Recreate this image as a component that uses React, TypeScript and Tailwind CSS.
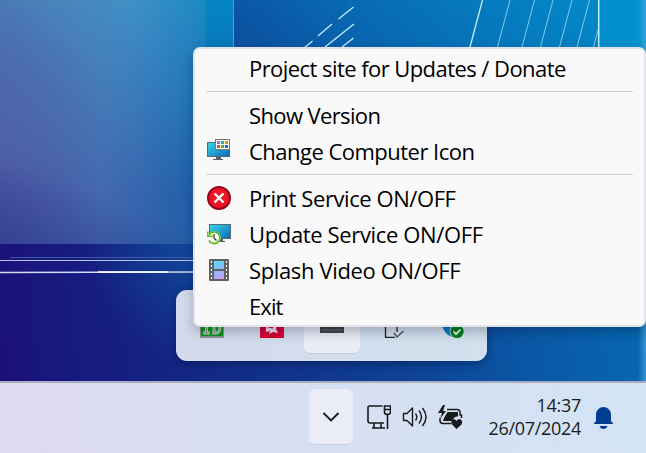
import type { ReactNode } from "react";

function Wallpaper() {
  return (
    <svg className="absolute inset-0" width="646" height="381" viewBox="0 0 646 381" aria-hidden="true">
      <defs>
        <linearGradient id="base" gradientUnits="userSpaceOnUse" x1="0" y1="381" x2="646" y2="300">
          <stop offset="0" stopColor="#1b1078" />
          <stop offset=".08" stopColor="#18177d" />
          <stop offset=".22" stopColor="#152182" />
          <stop offset=".35" stopColor="#122c86" />
          <stop offset=".62" stopColor="#0e4294" />
          <stop offset=".8" stopColor="#0b56a4" />
          <stop offset="1" stopColor="#0668b2" />
        </linearGradient>
        <radialGradient id="glow" gradientUnits="userSpaceOnUse" cx="230" cy="215" r="155">
          <stop offset="0" stopColor="#0d55a2" />
          <stop offset="1" stopColor="#0d55a2" stopOpacity="0" />
        </radialGradient>
        <linearGradient id="paneTop" x1="0" y1="0" x2="1" y2="0">
          <stop offset="0" stopColor="#4a7ab6" />
          <stop offset=".35" stopColor="#4987be" />
          <stop offset=".65" stopColor="#4090c8" />
          <stop offset="1" stopColor="#1b8ac4" />
        </linearGradient>
        <linearGradient id="paneLow" x1="0" y1="0" x2="1" y2="0">
          <stop offset="0" stopColor="#4c509f" />
          <stop offset=".5" stopColor="#4468ae" />
          <stop offset="1" stopColor="#1c5ea9" />
        </linearGradient>
        <linearGradient id="fade" x1="0" y1="0" x2="0" y2="1">
          <stop offset="0" stopColor="#fff" stopOpacity="0" />
          <stop offset=".8" stopColor="#fff" />
        </linearGradient>
        <mask id="fadeMask">
          <rect width="206" height="244" fill="url(#fade)" />
        </mask>
        <radialGradient id="violet" gradientUnits="userSpaceOnUse" cx="-10" cy="110" r="110">
          <stop offset="0" stopColor="#5066ae" stopOpacity=".7" />
          <stop offset="1" stopColor="#5066ae" stopOpacity="0" />
        </radialGradient>
        <linearGradient id="dusk" gradientUnits="userSpaceOnUse" x1="50" y1="175" x2="20" y2="255">
          <stop offset="0" stopColor="#2a3a8f" stopOpacity="0" />
          <stop offset="1" stopColor="#2a3a8f" stopOpacity=".7" />
        </linearGradient>
        <linearGradient id="window" x1="0" y1=".6" x2="1" y2=".4">
          <stop offset="0" stopColor="#0c509f" />
          <stop offset=".4" stopColor="#0869b2" />
          <stop offset="1" stopColor="#0386c5" />
        </linearGradient>
        <linearGradient id="strip" x1="0" y1="0" x2="0" y2="1">
          <stop offset="0" stopColor="#0585c3" />
          <stop offset="1" stopColor="#0675b8" />
        </linearGradient>
        <linearGradient id="edge" x1="0" y1="0" x2="1" y2="0">
          <stop offset="0" stopColor="#4baadb" stopOpacity="0" />
          <stop offset="1" stopColor="#4baadb" stopOpacity=".7" />
        </linearGradient>
      </defs>
      <rect width="646" height="381" fill="url(#base)" />
      <rect width="390" height="381" fill="url(#glow)" />
      <rect width="206" height="244" fill="url(#paneTop)" />
      <rect width="206" height="244" fill="url(#paneLow)" mask="url(#fadeMask)" />
      <rect width="206" height="244" fill="url(#violet)" />
      <rect y="160" width="206" height="84" fill="url(#dusk)" />
      <rect x="206" width="28" height="60" fill="url(#strip)" />
      <rect x="234" width="365" height="60" fill="url(#window)" />
      <rect x="599" width="47" height="60" fill="#0390cd" />
      <path d="M233.500 0V50" stroke="#4ba0d7" />
      <path d="M598.700 0V50" stroke="#c3f2fb" strokeWidth="1.500" />
      <g stroke="#c5f0f8" strokeWidth="1.300" fill="none">
        <path d="M353.500 7L338.500 19M332 24L318 36M312.500 41L304 48M354 24L325 47M353.500 38L342 47" />
        <path d="M482.500 0L470 47" />
      </g>
      <path
        d="M510 0L497.500 47M534.500 0L522 47M553 0L540.500 47M572 0L559.500 47M589.500 0L577 47M598 30L593.500 47"
        stroke="#82cbe9"
        fill="none"
      />
      <path d="M10 257.500H193" stroke="#3f5aaa" />
      <path d="M0 260.500H193" stroke="#b5c4f2" strokeWidth="1.200" />
      <path d="M0 272.500L193 272" stroke="#d5d8f5" strokeWidth="1.500" />
      <path d="M98 272H168" stroke="#fff" strokeWidth="1.500" />
      <rect x="638" width="8" height="381" fill="url(#edge)" />
    </svg>
  );
}

function Monitor() {
  return (
    <>
      <defs>
        <linearGradient id="screen" x1="0" y1="0" x2="1" y2="1">
          <stop stopColor="#37d8e5" />
          <stop offset="1" stopColor="#0868bd" />
        </linearGradient>
      </defs>
      <path d="M9 18h5v2h2v1H6v-1h3z" fill="#5b6064" />
      <rect x=".5" y="3.500" width="22" height="14" fill="url(#screen)" stroke="#546b75" />
    </>
  );
}

function DisplayIcon() {
  return (
    <svg className="relative -top-px" width="24" height="22" viewBox="0 0 24 22">
      <Monitor />
      <rect x="8.500" y=".5" width="14" height="10" fill="#fff" stroke="#77797b" />
      <path d="M10 2h3v3h-3z" fill="#9a6bd0" />
      <path d="M14 2h3v3h-3z" fill="#18b2b0" />
      <path d="M18 2h3v3h-3z" fill="#f58b00" />
      <path d="M10 6h3v3h-3z" fill="#e34b1c" />
      <path d="M14 6h3v3h-3z" fill="#54b516" />
      <path d="M18 6h3v3h-3z" fill="#0875d0" />
    </svg>
  );
}

function ErrorIcon() {
  return (
    <svg width="24" height="24" viewBox="0 0 24 24">
      <circle cx="12" cy="12" r="11" fill="#ed1428" stroke="#95051c" strokeWidth="2" />
      <path d="M7.500 7.500l9 9m0-9l-9 9" stroke="#fff" strokeWidth="2.400" />
    </svg>
  );
}

function UpdateIcon() {
  return (
    <svg width="24" height="22" viewBox="0 0 24 22">
      <rect x="2.500" y="1.500" width="21" height="14" fill="url(#screen)" stroke="#546b75" />
      <path d="M12 16h4v2h2v1h-6z" fill="#5b6064" />
      <circle cx="7.200" cy="14.800" r="6.500" fill="#f9f9f9" />
      <path d="M2 12A5.800 5.800 0 1 1 2 17.500" fill="none" stroke="#5ebd21" strokeWidth="1.700" />
      <path d="M.8 8.500v4.700H6" fill="none" stroke="#5ebd21" strokeWidth="1.500" />
      <path d="M7 11v4l2.500 2.500" fill="none" stroke="#333" strokeWidth="1.200" />
    </svg>
  );
}

function FilmIcon() {
  return (
    <svg width="20" height="22" viewBox="0 0 20 22">
      <defs>
        <linearGradient id="frames" gradientUnits="userSpaceOnUse" x1="5" y1="2" x2="14" y2="20">
          <stop stopColor="#58e1f9" />
          <stop offset=".5" stopColor="#8db8f8" />
          <stop offset="1" stopColor="#cf9bf8" />
        </linearGradient>
      </defs>
      <rect width="20" height="22" rx="1" fill="#606060" />
      <path d="M5 2h10v8H5zM5 12h10v8H5z" fill="url(#frames)" />
      <path d="M2.500 2v19M17.500 2v19" stroke="#f5f5f5" strokeWidth="1.200" strokeDasharray="2 2" />
    </svg>
  );
}

type RowProps = { text: string; spacing: string; icon?: ReactNode };

function Row({ text, spacing, icon }: RowProps) {
  return (
    <div className="flex h-9 items-center">
      <div className="flex w-[54px] shrink-0 pl-3">
        <span className="flex w-6 justify-center">{icon}</span>
      </div>
      <span className={`text-[22px] leading-9 whitespace-nowrap ${spacing}`}>{text}</span>
    </div>
  );
}

function Divider() {
  return (
    <div className="h-[11px] pt-[5px]">
      <div className="mr-[11px] ml-[11px] h-px bg-[#d2d2d2]" />
    </div>
  );
}

function ContextMenu() {
  return (
    <div className="absolute top-[47px] left-[193px] h-[280px] w-[453px] rounded-[7px] border-2 border-[#e2e3e6] bg-[#f9f9f9] pt-px text-black shadow-[0_5px_12px_rgba(0,0,30,0.25)]">
      <Row text="Project site for Updates / Donate" spacing="tracking-[-0.56px]" />
      <Divider />
      <Row text="Show Version" spacing="tracking-[-0.62px]" />
      <Row text="Change Computer Icon" spacing="tracking-[-0.52px]" icon={<DisplayIcon />} />
      <Divider />
      <Row text="Print Service ON/OFF" spacing="tracking-[-0.42px]" icon={<ErrorIcon />} />
      <Row text="Update Service ON/OFF" spacing="tracking-[-0.36px]" icon={<UpdateIcon />} />
      <Row text="Splash Video ON/OFF" spacing="tracking-[-0.36px]" icon={<FilmIcon />} />
      <Row text="Exit" spacing="tracking-[-0.9px]" />
    </div>
  );
}

function HiddenTray() {
  return (
    <div className="absolute top-[290px] left-[176px] flex h-[71px] w-[311px] items-end rounded-[11px] bg-linear-to-r from-[#d4daeb] to-[#d1e1ee] pb-[7px] pl-2 shadow-[0_3px_10px_rgba(0,0,40,0.35)]">
      <div className="flex h-14 w-[56px] justify-center pt-4">
        <svg width="24" height="24" viewBox="0 0 24 24">
          <rect width="24" height="24" fill="#85938c" />
          <rect x="1" width="22" height="22" fill="#049814" />
          <path d="M3 19h7M6.500 5v14M12 19h4q4 0 4-7t-4-7h-4M14 5v14" fill="none" stroke="#d2e0d3" strokeWidth="2.800" />
          <path d="M3 19h7M6.500 5v14M12 19h4q4 0 4-7t-4-7h-4M14 5v14" fill="none" stroke="#779079" />
        </svg>
      </div>
      <div className="flex h-14 w-[64px] justify-center pt-4">
        <svg width="24" height="24" viewBox="0 0 24 24">
          <rect width="24" height="24" fill="#d60537" />
          <path d="M6 10l11-1-1 6 2 4-5-1-4 2 1-3-4 1z" fill="#f4dfe9" />
          <path d="M8 12.500l5 1" stroke="#d60537" strokeWidth="2" />
        </svg>
      </div>
      <div className="flex h-14 w-14 justify-center rounded-md border-b border-[#c2cad9] bg-[#e8ecf5] pt-4">
        <svg width="24" height="20" viewBox="0 0 24 20">
          <rect width="24" height="19" fill="#424446" />
          <path d="M2 16h20M2 11h20" stroke="#696b6d" />
        </svg>
      </div>
      <div className="flex h-14 w-[64px] justify-center pt-4">
        <svg width="24" height="24" viewBox="0 0 24 24">
          <path d="M15 23.300H5.500V5H17v13" fill="none" stroke="#202226" strokeWidth="1.300" />
          <path d="M14 19l3 4 6.500-6" fill="none" stroke="#4c535a" strokeWidth="1.400" />
        </svg>
      </div>
      <div className="flex h-14 w-[56px] justify-center pt-4">
        <svg width="24" height="24" viewBox="0 0 24 24">
          <path d="M1 3l11-3 11 3c0 11-4 17-11 20C5 20 1 14 1 3" fill="#0876c6" />
          <circle cx="17" cy="17.500" r="7.500" fill="#d8e3ec" />
          <circle cx="17" cy="17.500" r="6.700" fill="#07831b" />
          <path d="M13.500 17.500l2.500 2.500 4.500-4.500" fill="none" stroke="#fff" strokeWidth="1.700" />
        </svg>
      </div>
    </div>
  );
}

function Taskbar() {
  return (
    <div className="absolute inset-x-0 bottom-0 flex h-[72px] border-t-2 border-[#a9adbf] bg-linear-to-r from-[#dfdaf0] via-[#d8def1] via-35% to-[#d3e4f5] pl-[309px]">
      <div className="mt-[6px] flex h-14 w-[44px] items-center justify-center rounded-md border-b border-[#c9cfe0] bg-[#eaedf8]">
        <svg width="18" height="12" viewBox="0 0 18 12">
          <path d="M1.500 2l7.500 7.500L16.500 2" fill="none" stroke="#191b1f" strokeWidth="1.900" />
        </svg>
      </div>
      <svg className="mt-[21px] ml-[13px]" width="25" height="26" viewBox="0 0 25 26">
        <g fill="none" stroke="#17191d" strokeWidth="1.600">
          <path d="M16.500 2H3.500Q2 2 2 3.500V17q0 2 2 2h14M8 19v5M15 19v5M6 24h13M21.500 11v14" />
          <path d="M18.500 2v6q0 2.500 3 2.500t3-2.500V2zM18.500 5.500h6" />
        </g>
      </svg>
      <svg className="mt-[23px] ml-[11px]" width="26" height="22" viewBox="0 0 26 22">
        <g fill="none" stroke="#17191d" strokeWidth="1.400">
          <path d="M1.500 7.500H5L10.500 2v18L5 14.500H1.500z" strokeLinejoin="round" />
          <path d="M13.500 7.500q2.500 3.500 0 7M17 4.500q5 6.500 0 13M20.500 2q7 9 0 18" />
        </g>
      </svg>
      <svg className="mt-[21px] ml-[9px]" width="26" height="26" viewBox="0 0 26 26">
        <path d="M10 5.500h10q3 0 3 3V11h1.500v3M3 14v2.500q0 3 3 3h8" fill="none" stroke="#17191d" strokeWidth="1.500" />
        <path d="M10.500 8H21v4.500q-4-.5-6 4.500H6l1-3z" fill="#17191d" />
        <path d="M6 1L1 9h4l-2 6 6-8H6l2-6z" fill="#17191d" />
        <path d="M19.500 25L15 20.500q-2-4 1.500-5.500 2 0 3 2 1-2 3-2 4 1 2 5.500z" fill="#17191d" />
      </svg>
      <div className="mt-[10px] ml-[24px] w-[94px] text-right text-[18px] leading-6 whitespace-nowrap text-[#1b1d21]">
        <div className="tracking-[-0.3px]">14:37</div>
        <div className="-mt-px tracking-[-0.3px]">26/07/2024</div>
      </div>
      <svg className="mt-[23px] ml-[12px]" width="22" height="24" viewBox="0 0 22 24">
        <path d="M3 15V8.500a7.500 7.500 0 0 1 15 0V15l2.500 3H.5z" fill="#003e93" />
        <path d="M6.500 20h8q-1 3-4 3t-4-3" fill="#003e93" />
      </svg>
    </div>
  );
}

export default function App() {
  return (
    <main className="relative h-[453px] w-[646px] overflow-hidden bg-[#12368b] font-['Open_Sans',sans-serif]">
      <Wallpaper />
      <HiddenTray />
      <ContextMenu />
      <Taskbar />
    </main>
  );
}
